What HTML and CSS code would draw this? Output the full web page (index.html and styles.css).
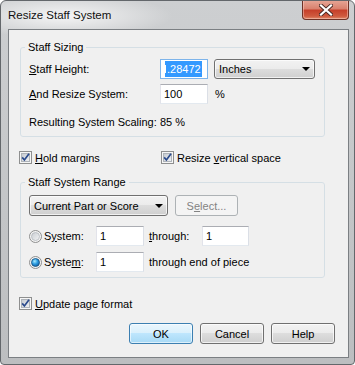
FILE: index.html
```html
<!DOCTYPE html>
<html lang="en">
<head>
    <meta charset="UTF-8">
    <title>Resize Staff System</title>
    <link rel="stylesheet" href="styles.css">
</head>
<body>
    <div class="window">
        <div class="titlebar">
            <span class="title">Resize Staff System</span>
            <div class="close-btn">
                <svg width="14" height="12" viewBox="0 0 14 12">
                    <path d="M2 1.5 L12 10.5 M12 1.5 L2 10.5" stroke="#4a2a24" stroke-width="4" stroke-linecap="square"/>
                    <path d="M2 1.5 L12 10.5 M12 1.5 L2 10.5" stroke="#fff" stroke-width="2.2" stroke-linecap="square"/>
                </svg>
            </div>
        </div>

        <div class="client">
            <!-- Staff sizing -->
            <fieldset class="group sizing">
                <legend>Staff Sizing</legend>
                <div class="row">
                    <span class="label"><u>S</u>taff Height:</span>
                    <div class="field focused"><div class="clip"><span class="sel">.28472</span></div></div>
                    <div class="combo units"><span>Inches</span><i class="arrow"></i></div>
                </div>
                <div class="row">
                    <span class="label"><u>A</u>nd Resize System:</span>
                    <div class="field"><div class="clip">100</div></div>
                    <span class="unit">%</span>
                </div>
                <div class="row text-row">
                    <span class="label">Resulting System Scaling:</span>
                    <span>85 %</span>
                </div>
            </fieldset>

            <div class="checks">
                <label class="check wide">
                    <svg width="13" height="13" viewBox="0 0 13 13"><use href="#cb"/></svg>
                    <span><u>H</u>old margins</span>
                </label>
                <label class="check">
                    <svg width="13" height="13" viewBox="0 0 13 13"><use href="#cb"/></svg>
                    <span>Resize <u>v</u>ertical space</span>
                </label>
            </div>

            <!-- Range -->
            <fieldset class="group range">
                <legend>Staff System Range</legend>
                <div class="row tall">
                    <div class="combo part"><span>Current Part or Score</span><i class="arrow"></i></div>
                    <div class="btn disabled">S<u>e</u>lect...</div>
                </div>
                <div class="row radio-row first">
                    <label class="radio">
                        <svg width="13" height="13" viewBox="0 0 13 13">
                            <circle cx="6.5" cy="6.5" r="6" fill="#f4f4f4" stroke="#8e8f8f"/>
                            <circle cx="6.5" cy="6.5" r="4" fill="url(#rg)" stroke="#b3b7bc" stroke-width="0.8"/>
                        </svg>
                        <span>S<u>y</u>stem:</span>
                    </label>
                    <div class="field"><div class="clip">1</div></div>
                    <span class="through"><u>t</u>hrough:</span>
                    <div class="field short"><div class="clip">1</div></div>
                </div>
                <div class="row radio-row">
                    <label class="radio">
                        <svg width="13" height="13" viewBox="0 0 13 13">
                            <circle cx="6.5" cy="6.5" r="6" fill="#f4f4f4" stroke="#8e8f8f"/>
                            <circle cx="6.5" cy="6.5" r="4" fill="url(#rdot)" stroke="#1d5480" stroke-width="0.8"/>
                        </svg>
                        <span>Syste<u>m</u>:</span>
                    </label>
                    <div class="field"><div class="clip">1</div></div>
                    <span class="through">through end of piece</span>
                </div>
            </fieldset>

            <label class="check update">
                <svg width="13" height="13" viewBox="0 0 13 13"><use href="#cb"/></svg>
                <span><u>U</u>pdate page format</span>
            </label>

            <div class="buttons">
                <div class="btn default">OK</div>
                <div class="btn">Cancel</div>
                <div class="btn">Help</div>
            </div>
        </div>
    </div>

    <!-- shared checkbox / radio parts -->
    <svg width="0" height="0" class="defs">
        <defs>
            <linearGradient id="cg" x1="0" y1="0" x2="1" y2="1">
                <stop offset="0" stop-color="#c4c9cf"/>
                <stop offset="1" stop-color="#f1f2f4"/>
            </linearGradient>
            <linearGradient id="rg" x1="0" y1="0" x2="1" y2="1">
                <stop offset="0" stop-color="#c9cdd2"/>
                <stop offset="1" stop-color="#f3f4f5"/>
            </linearGradient>
            <radialGradient id="rdot" cx="0.4" cy="0.35" r="0.7">
                <stop offset="0" stop-color="#a8ecff"/>
                <stop offset="0.5" stop-color="#2c9be0"/>
                <stop offset="1" stop-color="#0c5a9e"/>
            </radialGradient>
            <g id="cb">
                <rect x="0.5" y="0.5" width="12" height="12" fill="#f6f6f6" stroke="#8e8f8f"/>
                <rect x="2.5" y="2.5" width="8" height="8" fill="url(#cg)" stroke="#aeb3b9"/>
                <path d="M3.2 6.4 L5.4 9 L10 2.8" fill="none" stroke="#2a4a8c" stroke-width="1.7"/>
            </g>
        </defs>
    </svg>
</body>
</html>
```

FILE: styles.css
```css
* {
    box-sizing: border-box;
}
body {
    margin: 0;
    font-family: 'Liberation Sans', Arial, sans-serif;
    font-size: 11px;
    color: #000;
    background: #fff;
}
.defs {
    position: absolute;
}
u {
    text-decoration: underline;
    text-underline-offset: 1px;
}

/* window frame */
.window {
    width: 355px;
    height: 365px;
    border: 1px solid #63676b;
    border-radius: 6px 6px 4px 4px;
    background:
        radial-gradient(ellipse 110px 22px at 62px 15px, rgba(255, 255, 255, 0.8), rgba(255, 255, 255, 0)),
        linear-gradient(to bottom, #cdcfd1, #bcbec0);
    display: flex;
    flex-direction: column;
    overflow: hidden;
}
.titlebar {
    height: 28px;
    display: flex;
    align-items: flex-start;
    padding-left: 7px;
}
.title {
    line-height: 28px;
    font-size: 11.5px;
    color: #111;
}
.close-btn {
    margin-left: auto;
    margin-right: 5px;
    margin-top: -1px;
    width: 47px;
    height: 20px;
    border: 1px solid #6e3226;
    border-top: none;
    border-radius: 0 0 4px 4px;
    background: linear-gradient(to bottom, #e7a898 0%, #d9826f 45%, #c6402a 55%, #cf5a3e 85%, #e08a6a 100%);
    box-shadow: inset 0 0 0 1px rgba(255, 220, 210, 0.45);
    display: flex;
    align-items: center;
    justify-content: center;
}

/* client area */
.client {
    flex: 1;
    margin: 0 5px 6px 7px;
    border: 1px solid #7b7f83;
    background: #f0f0f0;
    padding-top: 10px;
    display: flex;
    flex-direction: column;
}
.group {
    margin: 0 0 0 11px;
    width: 305px;
    min-width: 0;
    border: 1px solid #d5dfe5;
    border-radius: 3px;
    padding: 5px 8px 6px 8px;
}
.group legend {
    padding: 0 3px;
    margin-left: -4px;
    line-height: 14px;
}
.row {
    display: flex;
    align-items: center;
    height: 20px;
    white-space: nowrap;
}
.row + .row {
    margin-top: 5px;
}
.sizing .text-row {
    margin-top: 10px;
    height: 16px;
}
.label {
    width: 131px;
}
.unit {
    margin-left: 7px;
}

/* text boxes */
.field {
    width: 48px;
    height: 20px;
    border: 1px solid;
    border-color: #abadb3 #dbdfe6 #e3e9ef #e2e3ea;
    background: #fff;
    padding: 0 3px;
    display: flex;
    align-items: center;
}
.field.focused {
    border-color: #7eb4ea;
    padding-left: 4px;
}
.field.short {
    width: 47px;
}
.clip {
    flex: 1;
    white-space: nowrap;
    line-height: 16px;
}
.sel {
    display: inline-block;
    background: #3399ff;
    color: #fff;
    padding-right: 1px;
}
.sel::before {
    content: "";
    display: inline-block;
    width: 1px;
    height: 8px;
    margin-right: 1px;
    background: #fff;
}

/* combo boxes and buttons */
.combo, .btn {
    height: 20px;
    border: 1px solid #707070;
    border-radius: 3px;
    background: linear-gradient(to bottom, #f2f2f2 0%, #ebebeb 50%, #dddddd 50%, #cfcfcf 100%);
    box-shadow: inset 0 0 0 1px rgba(255, 255, 255, 0.7);
}
.combo {
    display: flex;
    align-items: center;
    padding-left: 4px;
}
.combo.units {
    width: 101px;
    margin-left: 6px;
}
.combo.part {
    width: 139px;
    height: 21px;
}
.arrow {
    margin-left: auto;
    margin-right: 4px;
    width: 0;
    height: 0;
    border-left: 4px solid transparent;
    border-right: 4px solid transparent;
    border-top: 4px solid #000;
}
.btn {
    display: flex;
    align-items: center;
    justify-content: center;
    width: 64px;
    height: 21px;
}
.btn.disabled {
    width: 63px;
    margin-left: 7px;
    border-color: #adb2b5;
    background: #f4f4f4;
    box-shadow: none;
    color: #838383;
}
.btn.default {
    border-color: #3c7fb1;
    background: linear-gradient(to bottom, #eaf6fd 0%, #d9f0fc 50%, #bee6fd 50%, #a7d9f5 100%);
    box-shadow: inset 0 0 0 1px rgba(255, 255, 255, 0.6);
}
.range .row.tall {
    height: 21px;
}
.range .row.first {
    margin-top: 10px;
}
.range .row + .row.radio-row:not(.first) {
    margin-top: 6px;
}
.range {
    padding-top: 6px;
    padding-bottom: 5px;
}

/* check boxes and radios */
.checks {
    display: flex;
    margin: 14px 0 0 10px;
    height: 13px;
    white-space: nowrap;
}
.check, .radio {
    display: flex;
    align-items: center;
    gap: 3px;
}
.check svg, .radio svg {
    flex-shrink: 0;
}
.check.wide {
    width: 142px;
}
.checks + .group {
    margin-top: 11px;
}
.radio {
    width: 67px;
    gap: 2px;
}
.through {
    margin-left: 5px;
    width: 53px;
    white-space: nowrap;
}
.check.update {
    margin: 19px 0 0 10px;
    height: 13px;
}

.buttons {
    display: flex;
    gap: 7px;
    margin: 13px 0 0 120px;
}
```
